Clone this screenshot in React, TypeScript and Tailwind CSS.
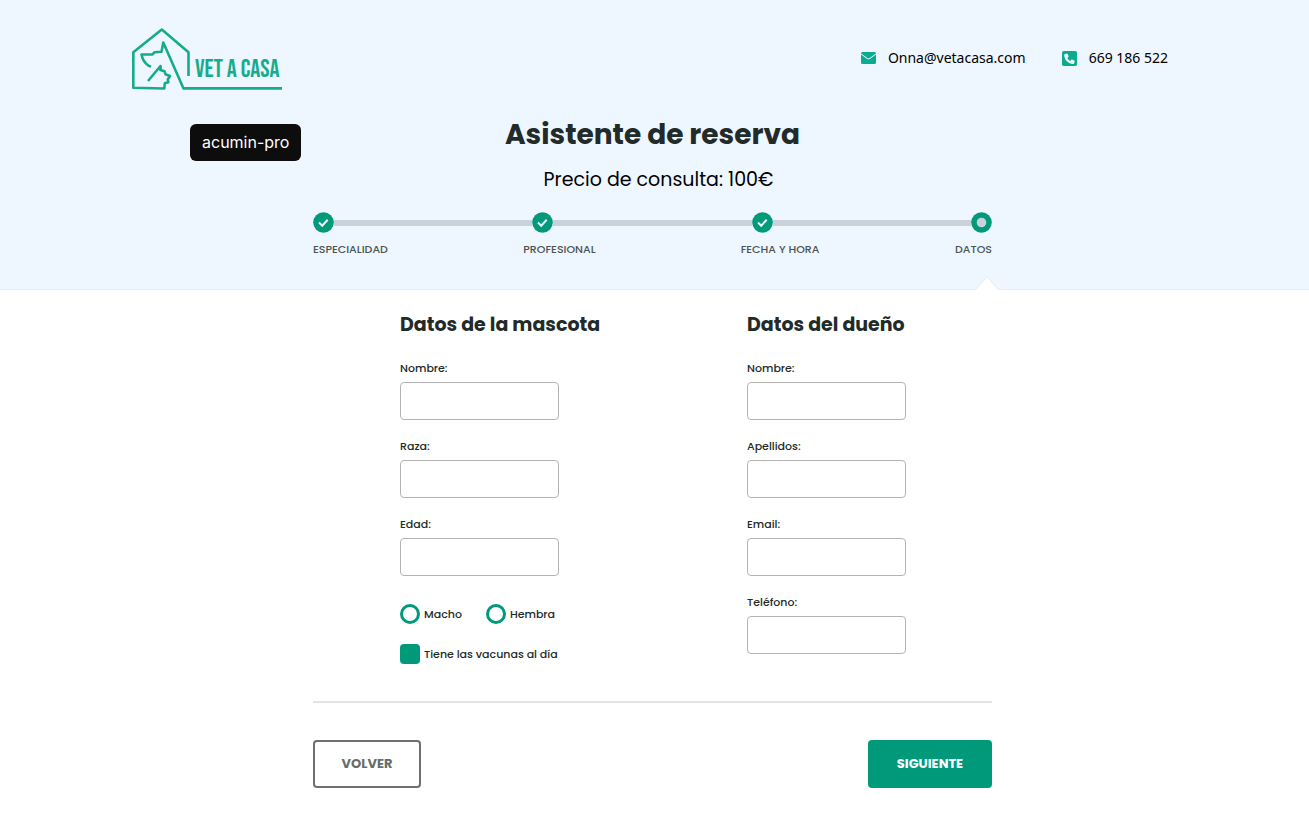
import { useState } from "react";

const steps = ["ESPECIALIDAD", "PROFESIONAL", "FECHA Y HORA", "DATOS"];

const petFields = [
  { id: "pet-name", label: "Nombre:", type: "text" },
  { id: "pet-breed", label: "Raza:", type: "text" },
  { id: "pet-age", label: "Edad:", type: "text" },
];

const ownerFields = [
  { id: "owner-name", label: "Nombre:", type: "text" },
  { id: "owner-surname", label: "Apellidos:", type: "text" },
  { id: "owner-email", label: "Email:", type: "email" },
  { id: "owner-phone", label: "Teléfono:", type: "tel" },
];

function Logo() {
  return (
    <svg width="152" height="64" viewBox="0 0 152 64" role="img" aria-label="Vet a casa">
      <g fill="none" stroke="#17ab8e" strokeWidth="2.6" strokeLinejoin="round">
        <path d="M56.500 48V24.300L29.800 1.500 1.300 24.300V59.800L32.300 60.500 32.800 55.300 36.300 54.300 35.800 51.500 38 48 33.500 46.300 32.500 43.300 28.500 42V38L16 53" />
        <path d="M19 38.700 16.500 37.600Q11 34 9.500 26.500H20.500L22.500 24.200 29.500 23.700 31.300 14.500 51.500 60.400H150" />
        <path d="M28.500 42 28 38" />
      </g>
      <text
        x="63"
        y="49"
        fill="#17ab8e"
        className="font-['Bebas_Neue','Liberation_Sans_Narrow',sans-serif] text-[25px]"
      >
        VET A CASA
      </text>
    </svg>
  );
}

function MailIcon() {
  return (
    <svg width="15" height="12" viewBox="0 0 15 12" aria-hidden="true">
      <path fill="#0aab8e" d="M1.500 0h12Q15 0 15 1.500L8.300 6.300Q7.500 6.900 6.700 6.300L0 1.500Q0 0 1.500 0Z" />
      <path fill="#0aab8e" d="M0 2.500 6.200 7Q7.500 7.800 8.800 7L15 2.500V10.500Q15 12 13.500 12H1.500Q0 12 0 10.500Z" />
    </svg>
  );
}

function PhoneIcon() {
  return (
    <svg width="15" height="15" viewBox="0 0 15 15" aria-hidden="true">
      <rect width="15" height="15" rx="1.800" fill="#0aab8e" />
      <path
        fill="#eef6ff"
        d="M2.500 3.200 4.800 2.500Q5.300 2.400 5.600 2.900L6.600 5.200Q6.700 5.700 6.400 6L5.300 7Q6.300 9 8.200 9.900L9.200 8.700Q9.500 8.300 10 8.500L12.300 9.500Q12.800 9.800 12.700 10.300L12.100 12.400Q11.900 12.900 11.400 12.900C6 12.900 2.200 9 2.200 3.800Q2.200 3.300 2.500 3.200Z"
      />
    </svg>
  );
}

function StepDot({ done }: { done: boolean }) {
  return (
    <svg className="shrink-0" width="21" height="21" viewBox="0 0 21 21" aria-hidden="true">
      <circle cx="10.500" cy="10.500" r="10.300" fill="#00997a" />
      {done ? (
        <path d="m6 10.500 3.200 3.200 5.500-6" fill="none" stroke="#eef6ff" strokeWidth="2" />
      ) : (
        <circle cx="10.500" cy="10.500" r="4.800" fill="#c9d1da" />
      )}
    </svg>
  );
}

function Stepper() {
  return (
    <div>
      <div className="flex items-center">
        {steps.map((step, i) => (
          <div key={step} className={i === 0 ? "flex items-center" : "flex flex-1 items-center"}>
            {i > 0 && <span className="h-1.5 flex-1 bg-[#c9d1da]" />}
            <StepDot done={i < steps.length - 1} />
          </div>
        ))}
      </div>
      <ol className="mt-2 grid grid-cols-[210fr_217fr_214fr_auto] text-[11px] leading-4 font-medium text-[#4c5355]">
        {steps.map((step) => (
          <li key={step}>{step}</li>
        ))}
      </ol>
    </div>
  );
}

function Field({ id, label, type }: { id: string; label: string; type: string }) {
  return (
    <div className="flex flex-col gap-1.5">
      <label htmlFor={id} className="text-[11px] leading-4 font-medium">
        {label}
      </label>
      <input
        id={id}
        type={type}
        className="h-[38px] w-[159px] rounded border border-[#b4b4b4] bg-white px-3 text-sm"
      />
    </div>
  );
}

export default function App() {
  const [sex, setSex] = useState("");
  const [vaccinated, setVaccinated] = useState(true);

  return (
    <div className="min-h-screen bg-white pb-11 font-[Poppins,Inter,sans-serif] text-[#222b2a]">
      <header className="relative border-b border-[#e8ecf1] bg-[#eef6ff] pb-8">
        <div className="flex items-start justify-between pt-7 pr-[141px] pl-33">
          <a href="#">
            <Logo />
          </a>
          <address className="mt-5 flex gap-9 font-['Noto_Sans',sans-serif] text-[14px] leading-5 text-black not-italic">
            <a href="mailto:Onna@vetacasa.com" className="flex items-center gap-3">
              <MailIcon />
              Onna@vetacasa.com
            </a>
            <a href="tel:669186522" className="flex items-center gap-3">
              <PhoneIcon />
              669 186 522
            </a>
          </address>
        </div>

        <span className="absolute top-31 left-[190px] rounded-md bg-[#0d0d0d] px-3 py-1.5 font-[Inter,sans-serif] text-[16px] leading-[25px] text-white">
          acumin-pro
        </span>

        <div className="mx-auto mt-[23px] w-full max-w-[683px] pr-1">
          <h1 className="text-center text-[28px] leading-10 font-bold">Asistente de reserva</h1>
          <p className="mt-[11px] mb-[18px] pl-3 text-center text-[19px] leading-7 text-black">
            Precio de consulta: 100€
          </p>
          <div className="relative">
            <Stepper />
            <svg
              className="absolute -right-1.5 -bottom-[33px]"
              width="22"
              height="14"
              viewBox="0 0 22 14"
              aria-hidden="true"
            >
              <path d="M0 13.500 11 .500 22 13.500V14H0Z" fill="#fff" />
              <path d="M0 13.500 11 .500 22 13.500" fill="none" stroke="#e8ecf1" />
            </svg>
          </div>
        </div>
      </header>

      <form className="mx-auto w-full max-w-[683px] pr-1" onSubmit={(e) => e.preventDefault()}>
        <div className="grid grid-cols-[347fr_245fr] pt-[21px] pl-[87px]">
          <section>
            <h2 className="mb-[21px] text-[19px] leading-7 font-bold">Datos de la mascota</h2>
            <div className="flex flex-col gap-[18px]">
              {petFields.map((f) => (
                <Field key={f.id} {...f} />
              ))}
            </div>
            <div className="mt-7 flex gap-6 text-[11px] leading-5 font-medium">
              {["Macho", "Hembra"].map((option) => (
                <label key={option} className="flex items-center gap-1">
                  <input
                    type="radio"
                    name="sex"
                    value={option}
                    checked={sex === option}
                    onChange={() => setSex(option)}
                    className="size-5 appearance-none rounded-full border-3 border-[#00997a] bg-white checked:bg-[#00997a]"
                  />
                  {option}
                </label>
              ))}
            </div>
            <label className="mt-5 flex items-center gap-1 text-[11px] leading-5 font-medium">
              <input
                type="checkbox"
                checked={vaccinated}
                onChange={(e) => setVaccinated(e.target.checked)}
                className="size-5 appearance-none rounded border-2 border-[#00997a] bg-white checked:bg-[#00997a]"
              />
              Tiene las vacunas al día
            </label>
          </section>

          <section>
            <h2 className="mb-[21px] text-[19px] leading-7 font-bold">Datos del dueño</h2>
            <div className="flex flex-col gap-[18px]">
              {ownerFields.map((f) => (
                <Field key={f.id} {...f} />
              ))}
            </div>
          </section>
        </div>

        <div className="mt-[37px] flex justify-between border-t-2 border-[#e4e4e4] pt-[37px]">
          <button
            type="button"
            className="h-12 w-27 rounded border-2 border-[#6b7170] text-[13px] font-bold text-[#666d6b]"
          >
            VOLVER
          </button>
          <button type="submit" className="h-12 w-31 rounded bg-[#00997a] text-[13px] font-bold text-white">
            SIGUIENTE
          </button>
        </div>
      </form>
    </div>
  );
}
